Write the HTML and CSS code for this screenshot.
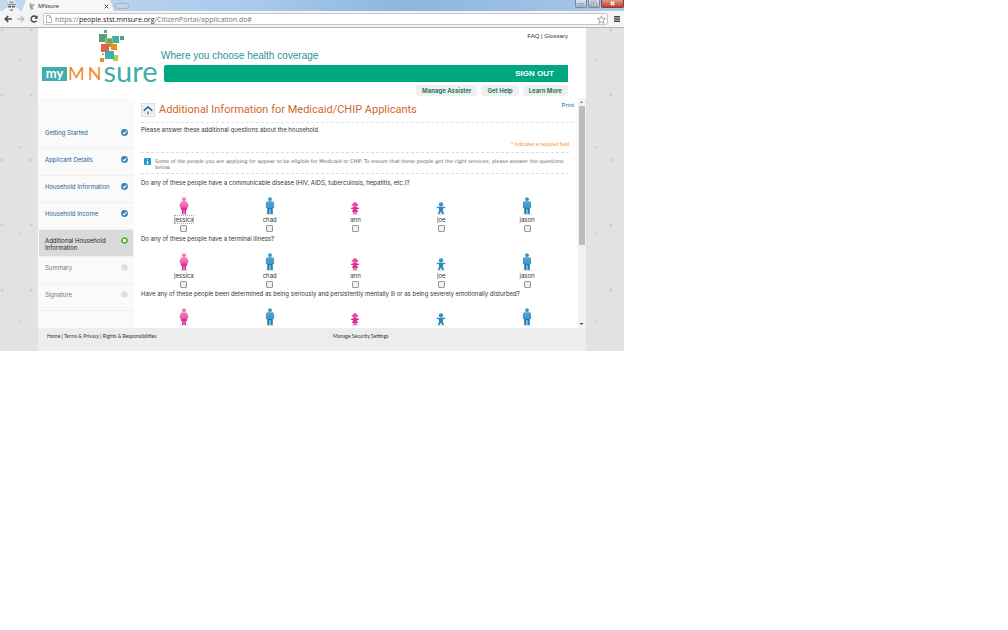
FILE: index.html
```html
<!DOCTYPE html>
<html lang="en">
<head>
<meta charset="utf-8">
<title>MNsure</title>
<link rel="stylesheet" href="styles.css">
</head>
<body>
<svg class="defs" aria-hidden="true">
  <defs>
    <linearGradient id="pinkFill" x1="0" y1="0" x2="0" y2="1"><stop offset="0" stop-color="#f07fbd"/><stop offset=".45" stop-color="#ec5aa9"/><stop offset=".55" stop-color="#dd2f8d"/><stop offset="1" stop-color="#e0308f"/></linearGradient>
    <linearGradient id="blueFill" x1="0" y1="0" x2="0" y2="1"><stop offset="0" stop-color="#55a5cf"/><stop offset=".5" stop-color="#3f97c8"/><stop offset=".55" stop-color="#1f78ad"/><stop offset="1" stop-color="#2a86bb"/></linearGradient>
    <symbol id="woman" viewBox="0 0 10 18"><ellipse cx="5" cy="17.200" rx="4.500" ry=".8" fill="#ddd"/><circle cx="5" cy="2.200" r="2" fill="#ee7ab9"/><path fill="url(#pinkFill)" d="M3.500 4.200h3Q8.500 4.400 9 7l.5 2.500-1.200 1L8 13H7v4H5.300v-3.500h-.6V17H3v-4H2l-.3-2.500-1.200-1L1 7q.5-2.600 2.500-2.800z"/></symbol>
    <symbol id="man" viewBox="0 0 10 18"><ellipse cx="5" cy="17.200" rx="4.500" ry=".8" fill="#ddd"/><circle cx="5" cy="2.200" r="1.900" fill="#3d94c4"/><path fill="url(#blueFill)" d="M2.500 4.300h5q1.500 0 1.600 1.600V11H7.800v6H5.400v-5h-.8v5H2.200v-6H.9V5.900q.1-1.600 1.600-1.600z"/></symbol>
    <symbol id="girl" viewBox="0 0 10 18"><ellipse cx="5" cy="17.200" rx="4" ry=".7" fill="#ddd"/><circle cx="5" cy="7.700" r="2.400" fill="#e74fa3"/><circle cx="2.400" cy="8" r=".8" fill="#e0308f"/><circle cx="7.600" cy="8" r=".8" fill="#e0308f"/><path fill="#df3291" d="M1 11 3.600 10h2.800L9 11v1L6.800 12 8.200 15H6.600v2H5.300v-2h-.6v2H3.400v-2H1.800l1.400-3L1 12z"/></symbol>
    <symbol id="boy" viewBox="0 0 10 18"><ellipse cx="5" cy="17.200" rx="4" ry=".7" fill="#ddd"/><circle cx="5" cy="7.500" r="2.200" fill="#3a93c5"/><path fill="#2a86bb" d="M.8 9.400 3.400 9.900h3.200L9.200 9.400v1.400L7 11.600V14l1.200 3H6.500L5 14.700 3.500 17H1.800L3 14v-2.400L.8 10.800z"/></symbol>
    <symbol id="done" viewBox="0 0 7 7"><circle cx="3.500" cy="3.500" r="3.400" fill="#3983b0"/><path d="M1.900 3.500 3.100 4.800 5.400 2.100" fill="none" stroke="#fff" stroke-width="1.100"/></symbol>
    <symbol id="flag" viewBox="0 0 26 33"><path fill="#45aeb0" d="M6 0h3v3H6z"/><path fill="#5a9a78" d="M1 4h8v8H1z"/><path fill="#42adad" d="M14 6h7v7h-7z"/><path fill="#a8c34b" d="M7 8h8v7H7z"/><path fill="#67a56f" d="M9 9h5v4H9z"/><path fill="#5b9f7d" d="M22 6h4v4h-4z"/><path fill="#df634b" d="M3 14h8v8H3z"/><path fill="#f18d1d" d="M13 14h6v6h-6z"/><path fill="#c9802f" d="M10 14h3v3h-3z"/><path fill="#b5c94c" d="M4 23h2v2H4zM15 25h5v6h-5z"/><path fill="#3faeb0" d="M7 21h9v8H7z"/><path fill="#f18d1d" d="M2 28h4v4H2z"/></symbol>
  </defs>
</svg>
<div class="window">
  <div class="tabstrip">
    <svg class="incognito" viewBox="0 0 17 11" aria-hidden="true"><path fill="#f2f3f4" d="M0 11q1-3 5-3.500L4 5H2l3-1.500L6 .3h5l1 3.200L15 5h-2l-1 2.500q4 .5 5 3.500z"/><path fill="#7b8085" d="M4 4.300q4.500-1 9 0v1H4z"/><path fill="#44494e" d="M5 6h3v1.600H5.500zM9 6h3l-.5 1.600H9z"/><path fill="#a5a8ab" d="M6.500 1.300h4l.5 2H6zM7 9h3v2H7z"/></svg>
    <div class="tab">
      <svg class="favicon" viewBox="0 0 26 33" aria-hidden="true"><use href="#flag"/></svg>
      <span>MNsure</span>
      <button class="tab-close" aria-label="Close tab"><svg viewBox="0 0 5 5"><path d="M.7.7l3.600 3.600M4.300.7.7 4.300" stroke="#444" stroke-width=".9"/></svg></button>
    </div>
    <button class="new-tab" aria-label="New tab"></button>
    <div class="win-buttons">
      <button aria-label="Minimize"><svg viewBox="0 0 10 8"><path d="M2 4h6v1.500H2z" fill="#fff" stroke="#556" stroke-width=".5"/></svg></button>
      <button aria-label="Restore"><svg viewBox="0 0 10 8"><path d="M3 2h4.500v4H3z" fill="#8aa" stroke="#fff"/><path d="M2.300 1.300h5.900v5.400H2.300z" fill="none" stroke="#556" stroke-width=".5"/></svg></button>
      <button class="win-close" aria-label="Close"><svg viewBox="0 0 10 8"><path d="M3 2l4 4M7 2 3 6" stroke="#fff" stroke-width="1.500"/></svg></button>
    </div>
  </div>
  <div class="toolbar">
    <button aria-label="Back"><svg viewBox="0 0 8 8"><path d="M7.800 4H1.500M4.200 1 1.200 4l3 3" fill="none" stroke="#444" stroke-width="1.500"/></svg></button>
    <button aria-label="Forward"><svg viewBox="0 0 8 8"><path d="M.2 4h6.300M3.800 1l3 3-3 3" fill="none" stroke="#bbb" stroke-width="1.300"/></svg></button>
    <button aria-label="Reload"><svg viewBox="0 0 8 8"><path d="M6.600 5.600A3 3 0 1 1 6.300 2" fill="none" stroke="#444" stroke-width="1.300"/><path d="M7.600.3v3.400H4.200z" fill="#444"/></svg></button>
    <div class="address">
      <svg viewBox="0 0 6 8" aria-hidden="true"><path d="M.5.5h3l2 2v5h-5zM3.500.5v2h2" fill="#fff" stroke="#999" stroke-width=".7"/></svg>
      <span>https://<b>people.stst.mnsure.org</b>/CitizenPortal/application.do#</span>
      <button class="star" aria-label="Bookmark"><svg viewBox="0 0 10 10"><path d="M5 .8 6.200 3.700l3.200.2L7 6l.8 3.200L5 7.500 2.200 9.200 3 6 .6 3.900l3.200-.2z" fill="#fff" stroke="#777" stroke-width=".7"/></svg></button>
    </div>
    <button aria-label="Menu"><svg viewBox="0 0 8 8"><path d="M1 1.700h6M1 4h6M1 6.300h6" stroke="#444" stroke-width="1.400"/></svg></button>
  </div>
  <div class="viewport">
    <div class="site">
      <header class="header">
        <a class="logo" href="#" aria-label="my MNsure">
          <svg class="flag" viewBox="0 0 26 33" aria-hidden="true"><use href="#flag"/></svg>
          <span class="wordmark"><span class="my">my</span><span class="mn"><span>M</span><span>N</span></span><span class="sure">sure</span></span>
        </a>
        <div class="banner">
          <div class="top-links"><a href="#">FAQ</a> | <a href="#">Glossary</a></div>
          <div class="tagline">Where you choose health coverage</div>
          <div class="bar"><button>SIGN OUT</button></div>
          <nav class="help"><a href="#">Manage Assister</a><a href="#">Get Help</a><a href="#">Learn More</a></nav>
        </div>
      </header>
      <div class="body">
        <nav class="steps">
          <a class="step" href="#"><span>Getting Started</span><svg viewBox="0 0 7 7"><use href="#done"/></svg></a>
          <a class="step" href="#"><span>Applicant Details</span><svg viewBox="0 0 7 7"><use href="#done"/></svg></a>
          <a class="step" href="#"><span>Household Information</span><svg viewBox="0 0 7 7"><use href="#done"/></svg></a>
          <a class="step" href="#"><span>Household Income</span><svg viewBox="0 0 7 7"><use href="#done"/></svg></a>
          <a class="step current" href="#" aria-current="step"><span>Additional Household Information</span><svg viewBox="0 0 7 7"><circle cx="3.500" cy="3.500" r="2.500" fill="#fff" stroke="#4fa62f" stroke-width="1.700"/></svg></a>
          <a class="step pending" href="#"><span>Summary</span><svg viewBox="0 0 7 7"><circle cx="3.500" cy="3.500" r="3.200" fill="#dedede"/></svg></a>
          <a class="step pending" href="#"><span>Signature</span><svg viewBox="0 0 7 7"><circle cx="3.500" cy="3.500" r="3.200" fill="#dedede"/></svg></a>
        </nav>
        <main class="content">
          <div class="title-row">
            <a class="home" href="#" aria-label="Home"><svg viewBox="0 0 12 12"><path d="M2.500 6.500 6 3.300l3.500 3.200V11h-7z" fill="#fff" stroke="#b9c4cb" stroke-width=".6"/><path d="M5 7.500h2V11H5z" fill="#b9663c"/><path d="M.8 7 6 2.300 11.200 7" fill="none" stroke="#195a83" stroke-width="1.700"/></svg></a>
            <h1>Additional Information for Medicaid/CHIP Applicants</h1>
            <a class="print" href="#">Print</a>
          </div>
          <p class="intro">Please answer these additional questions about the household.</p>
          <p class="required">* Indicates a required field</p>
          <div class="info">
            <svg viewBox="0 0 7 7" aria-hidden="true"><rect width="7" height="7" rx="1" fill="#1e9bc4"/><path d="M3 1.200h1.100v1.100H3zM2.600 2.900h1.500v2h.5v.8H2.500v-.8H3V3.600h-.4z" fill="#fff"/></svg>
            <p>Some of the people you are applying for appear to be eligible for Medicaid or CHIP. To ensure that these people get the right services, please answer the questions<br>below.</p>
          </div>
          <fieldset class="question first">
            <legend>Do any of these people have a communicable disease (HIV, AIDS, tuberculosis, hepatitis, etc.)?</legend>
            <div class="people">
              <label class="focused"><svg viewBox="0 0 10 18"><use href="#woman"/></svg><span>jessica</span><input type="checkbox"></label>
              <label><svg viewBox="0 0 10 18"><use href="#man"/></svg><span>chad</span><input type="checkbox"></label>
              <label><svg viewBox="0 0 10 18"><use href="#girl"/></svg><span>ann</span><input type="checkbox"></label>
              <label><svg viewBox="0 0 10 18"><use href="#boy"/></svg><span>joe</span><input type="checkbox"></label>
              <label><svg viewBox="0 0 10 18"><use href="#man"/></svg><span>jason</span><input type="checkbox"></label>
            </div>
          </fieldset>
          <fieldset class="question">
            <legend>Do any of these people have a terminal illness?</legend>
            <div class="people">
              <label><svg viewBox="0 0 10 18"><use href="#woman"/></svg><span>jessica</span><input type="checkbox"></label>
              <label><svg viewBox="0 0 10 18"><use href="#man"/></svg><span>chad</span><input type="checkbox"></label>
              <label><svg viewBox="0 0 10 18"><use href="#girl"/></svg><span>ann</span><input type="checkbox"></label>
              <label><svg viewBox="0 0 10 18"><use href="#boy"/></svg><span>joe</span><input type="checkbox"></label>
              <label><svg viewBox="0 0 10 18"><use href="#man"/></svg><span>jason</span><input type="checkbox"></label>
            </div>
          </fieldset>
          <fieldset class="question">
            <legend>Have any of these people been determined as being seriously and persistently mentally ill or as being severely emotionally disturbed?</legend>
            <div class="people">
              <svg viewBox="0 0 10 18"><use href="#woman"/></svg>
              <svg viewBox="0 0 10 18"><use href="#man"/></svg>
              <svg viewBox="0 0 10 18"><use href="#girl"/></svg>
              <svg viewBox="0 0 10 18"><use href="#boy"/></svg>
              <svg viewBox="0 0 10 18"><use href="#man"/></svg>
            </div>
          </fieldset>
        </main>
        <div class="scrollbar" aria-hidden="true">
          <svg viewBox="0 0 7 6"><path d="M2 4h3L3.500 2.200z" fill="#777"/></svg>
          <div class="track"><div class="thumb"></div></div>
          <svg viewBox="0 0 7 6"><path d="M1.800 2h3.400L3.500 4z" fill="#333"/></svg>
        </div>
      </div>
      <footer class="footer">
        <div><a href="#">Home</a> | <a href="#">Terms &amp; Privacy</a> | <a href="#">Rights &amp; Responsibilities</a></div>
        <div><a href="#">Manage Security Settings</a></div>
      </footer>
    </div>
  </div>
</div>
</body>
</html>
```
FILE: styles.css
```css
* { box-sizing: border-box; }
body { margin: 0; background: #fff; font-family: "Liberation Sans", Arial, sans-serif; font-size: 6px; line-height: 7px; color: #333; }
a { color: inherit; text-decoration: none; }
p, h1 { margin: 0; }
button { border: 0; padding: 0; background: none; font: inherit; color: inherit; display: flex; align-items: center; justify-content: center; }
svg { display: block; flex: none; }
.defs { position: absolute; width: 0; height: 0; }
.window { width: 61.9%; }

.tabstrip { display: flex; height: 11px; padding-left: 3px; background: linear-gradient(90deg, #c5d9ee, #a9caec 40%, #8fb4de 65%, #a8c8ea); }
.incognito { width: 17px; height: 11px; }
.tab { display: flex; align-items: center; gap: 3px; width: 92px; margin-left: 2px; padding: 1px 5px 0 7px; background: #f6f7f8; clip-path: polygon(4px 0, 88px 0, 100% 100%, 0 100%); }
.favicon { width: 6px; height: 7px; }
.tab span { flex: 1; }
.tab-close svg { width: 5px; height: 5px; }
.new-tab { width: 14px; height: 6px; margin: 3px 0 0 1px; background: #c3d3e3; border: 1px solid #9fb3c7; border-radius: 1px 1px 3px 3px; }
.win-buttons { display: flex; height: 8px; margin-left: auto; gap: 1px; }
.win-buttons button { width: 12px; background: linear-gradient(#dbe6f1, #9db2c7); border: 1px solid #7589a0; border-top: 0; border-radius: 0 0 2px 2px; }
.win-buttons .win-close { width: 23px; background: linear-gradient(#e09a8c, #c3402b); border-color: #8a3b32; }
.win-buttons svg { width: 9px; height: 7px; }

.toolbar { display: flex; align-items: center; gap: 5px; height: 17px; padding: 0 3px 0 4px; background: #f4f4f5; border-bottom: 1px solid #b5b5b5; }
.toolbar > button svg { width: 8px; height: 8px; }
.address { flex: 1; display: flex; align-items: center; gap: 3px; height: 12px; padding: 0 1px 0 2px; background: #fff; border: 1px solid #c6c6c6; border-radius: 2px; font-family: "Open Sans", sans-serif; font-size: 7px; color: #777; }
.address > svg { width: 6px; height: 8px; }
.address span { flex: 1; }
.address b { font-weight: 400; color: #222; }
.star svg { width: 9px; height: 9px; }

.viewport {
  padding: 0 38px;
  background:
    radial-gradient(circle at 2px 2px, #c2d2da 1px, transparent 2px) 0 0 / 29px 65px,
    radial-gradient(circle at 20px 32px, #d9d4c4 1px, transparent 2px) 0 0 / 36px 87px,
    #e2e2e5;
}
.site { background: #fff; }
.header { display: flex; height: 70px; padding: 0 18px 0 4px; }
.logo { width: 122px; flex: none; padding-top: 2px; }
.flag { width: 26px; height: 33px; margin-left: 56px; }
.wordmark { display: flex; align-items: flex-end; height: 19px; font-family: Lato, sans-serif; }
.my { width: 25px; height: 14px; margin-bottom: 1px; background: #43adad; color: #fff; font-weight: 700; font-size: 13px; line-height: 12px; text-align: center; }
.mn { display: flex; gap: 3px; margin-left: 1px; color: #f08c22; font-size: 18px; line-height: 18px; }
.sure { margin-left: 2px; color: #43adad; font-size: 29px; line-height: 22px; }
.banner { flex: 1; }
.top-links { padding-top: 5px; text-align: right; }
.tagline { margin: 9px 0 2px -3px; font-size: 10px; line-height: 14px; color: #2a9494; }
.bar { display: flex; justify-content: flex-end; height: 17px; padding-right: 14px; background: #00a881; border-radius: 2px 0 0 2px; color: #fff; font-size: 8px; font-weight: 700; }
.bar button { font-weight: 700; }
.help { display: flex; justify-content: flex-end; gap: 4px; margin-top: 3px; font-family: Inter, sans-serif; }
.help a { padding: 2px 6px; background: #f0f0f0; border-radius: 2px; color: #1a7d62; font-weight: 700; }

.body { display: flex; height: 230px; }
.steps { width: 97px; flex: none; padding: 24px 2px 0 1px; background: #fafafb; font-family: Inter, sans-serif; }
.step { display: flex; justify-content: space-between; height: 27px; padding: 7px 5px 0 6px; border-bottom: 1px solid #efefef; color: #28608f; }
.step span { max-width: 70px; }
.step svg { width: 7px; height: 7px; }
.step.current { background: #dadada; color: #222; }
.step.pending { color: #777; }

.content { flex: 1; min-width: 0; padding: 0 4px 0 6px; overflow: hidden; }
.title-row { display: flex; align-items: center; gap: 4px; height: 25px; border-bottom: 1px dashed #e2e2e2; }
.home { padding: 1px; background: #f2f2f2; border: 1px solid #ddd; }
.home svg { width: 10px; height: 10px; }
h1 { flex: 1; font-family: Roboto, sans-serif; font-size: 11px; line-height: 14px; font-weight: 400; color: #cf6a2c; }
.print { align-self: flex-start; padding-top: 4px; color: #28608f; }
.intro { padding: 3px 0 0; font-family: Inter, sans-serif; }
.required { margin-right: 5px; padding: 8px 0 4px; text-align: right; font-size: 5px; color: #f7931e; }
.info { display: flex; gap: 4px; margin-right: 5px; height: 22px; padding: 5px 0 0 3px; border-top: 1px dashed #ddd; border-bottom: 1px dashed #ddd; color: #666; font-family: "DejaVu Sans", sans-serif; font-size: 5px; line-height: 6px; }
.info p { white-space: nowrap; }
.info svg { width: 7px; height: 7px; }
.question { margin: 0; padding: 0; border: 0; min-width: 0; height: 55px; font-family: Inter, sans-serif; }
.question.first { height: 56px; margin-top: 5px; }
legend { padding: 0; white-space: nowrap; }
.people { display: grid; grid-template-columns: repeat(5, 1fr); margin-right: 4px; padding-top: 11px; justify-items: center; }
.people svg { width: 10px; height: 18px; }
.people label { display: flex; flex-direction: column; align-items: center; }
.people label span { line-height: 9px; }
.people .focused span { outline: 1px dotted #aaa; outline-offset: -1px; }
.people input { appearance: none; width: 7px; height: 7px; margin: 1px 0 0; background: #f1f1f1; border: 1px solid #999; border-radius: 1px; }
.scrollbar { display: flex; flex-direction: column; width: 8px; flex: none; background: #f1f1f1; }
.scrollbar svg { width: 7px; height: 8px; }
.track { flex: 1; }
.thumb { width: 6px; height: 65%; margin: 0 1px; background: #bcbcbc; }
.footer { display: grid; grid-template-columns: 286px 1fr; height: 23px; padding: 5px 9px; background: #ededed; font-family: Lato, sans-serif; font-size: 5px; }
```
